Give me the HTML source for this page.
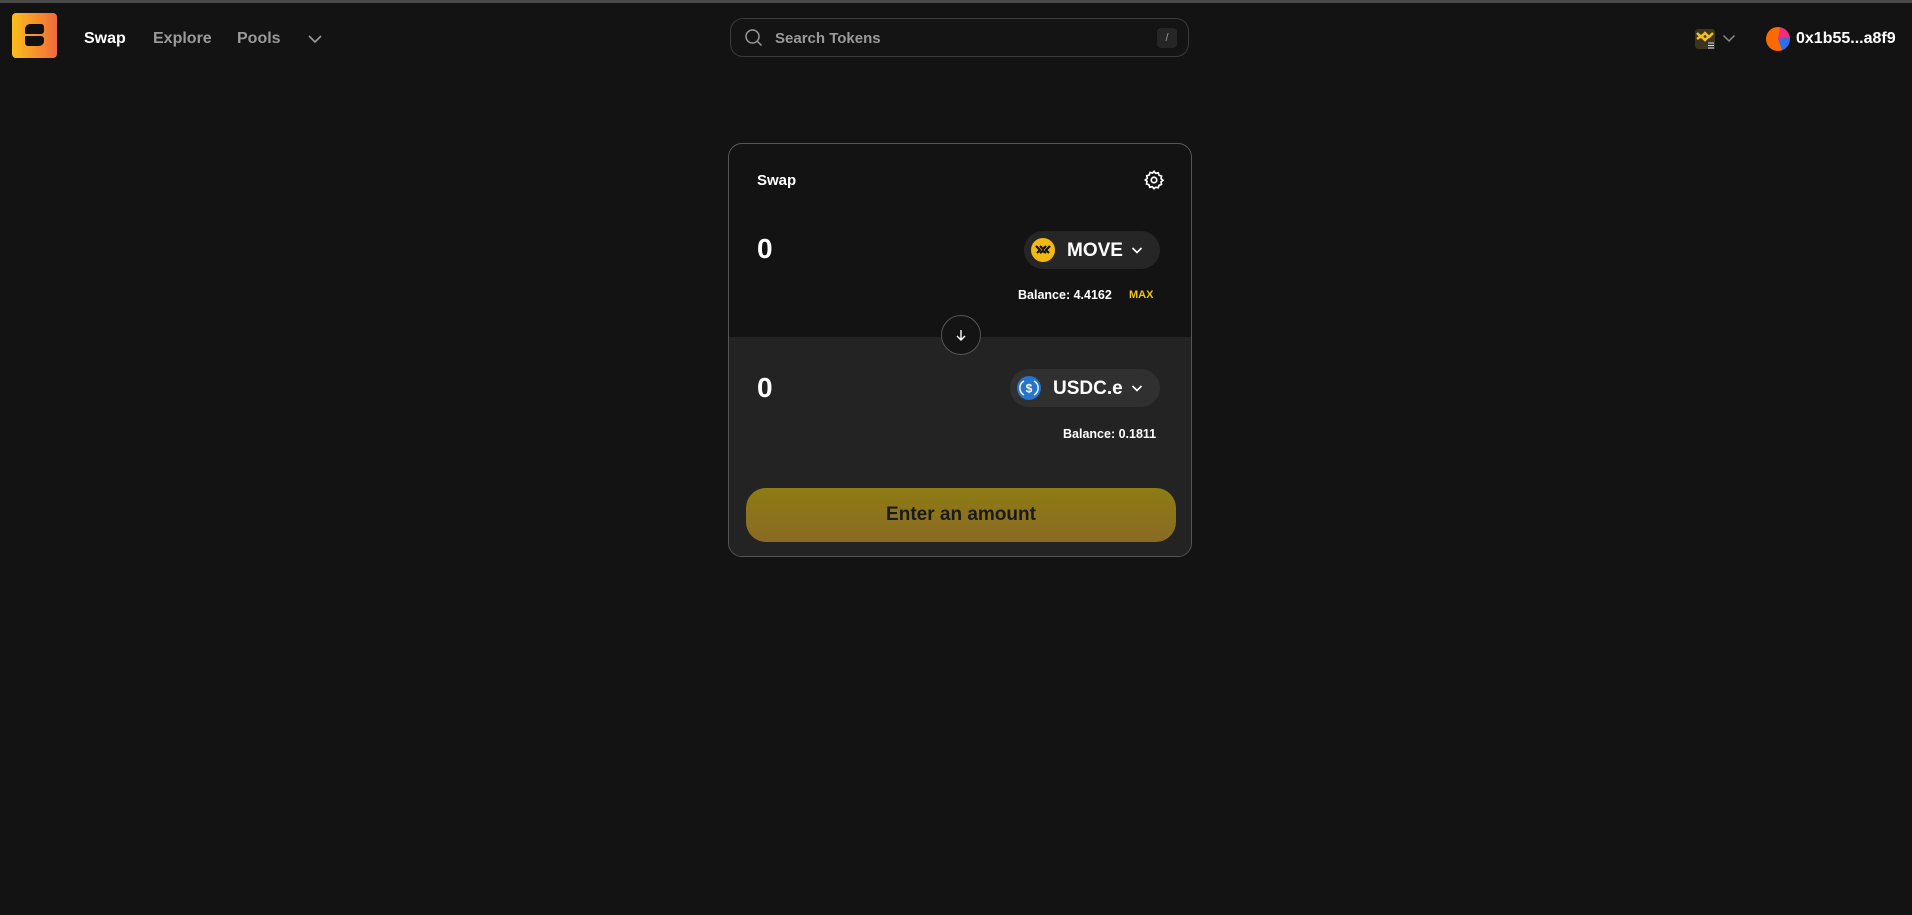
<!DOCTYPE html>
<html><head><meta charset="utf-8"><style>
*{box-sizing:border-box;margin:0;padding:0}
body{width:1912px;height:915px;background:#131313;font-family:"Liberation Sans",sans-serif;color:#fff;position:relative;overflow:hidden}
.abs{position:absolute}
.topline{left:0;top:0;width:1912px;height:3px;background:#4a4a4a}
.nav{font-size:16px;font-weight:bold;top:30px}
</style></head><body>
<div class="abs topline"></div>
<div class="abs" style="left:12px;top:13px;width:45px;height:45px;border-radius:4px;background:linear-gradient(90deg,#fbbf1a,#f06a3c)">
 <div class="abs" style="left:13px;top:11px;width:19px;height:10px;background:#111;border-radius:5px 3px 3px 1px"></div>
 <div class="abs" style="left:13px;top:23px;width:19px;height:10px;background:#111;border-radius:1px 3px 5px 3px"></div>
</div>
<div class="abs nav" style="left:84px;color:#fff">Swap</div>
<div class="abs nav" style="left:153px;color:#9a9a9a">Explore</div>
<div class="abs nav" style="left:237px;color:#9a9a9a">Pools</div>
<svg class="abs" style="left:307px;top:34px" width="16" height="10" viewBox="0 0 16 10"><path d="M2 2l6 6 6-6" stroke="#9a9a9a" stroke-width="1.6" fill="none"/></svg>

<div class="abs" style="left:730px;top:18px;width:459px;height:39px;border:1px solid #3a3a3a;border-radius:13px;background:#141414"></div>
<svg class="abs" style="left:744px;top:28px" width="20" height="20" viewBox="0 0 20 20"><circle cx="8.5" cy="8.5" r="6.5" stroke="#9a9a9a" stroke-width="1.5" fill="none"/><path d="M13.5 13.5l4 4" stroke="#9a9a9a" stroke-width="1.5"/></svg>
<div class="abs" style="left:775px;top:30px;font-size:15px;font-weight:bold;color:#9a9a9a">Search Tokens</div>
<div class="abs" style="left:1157px;top:28px;width:20px;height:20px;background:#262626;border-radius:4px;color:#999;font-size:11px;text-align:center;line-height:20px">/</div>

<div class="abs" style="left:1695px;top:29px;width:20px;height:20px;background:#3a3420;border-radius:3px">
 <svg width="20" height="20" viewBox="0 0 20 20"><path d="M2 4l4 4 4-4 4 4 4-4M2 10l4-3 4 4 4-4" stroke="#f2c21b" stroke-width="2.5" fill="none"/><rect x="12" y="12" width="8" height="8" fill="#333"/><path d="M13 14h6M13 16.5h6M13 19h6" stroke="#ddd" stroke-width="1"/></svg>
</div>
<svg class="abs" style="left:1722px;top:34px" width="14" height="9" viewBox="0 0 14 9"><path d="M1.5 1.5l5.5 5.5 5.5-5.5" stroke="#888" stroke-width="1.5" fill="none"/></svg>
<div class="abs" style="left:1766px;top:27px;width:24px;height:24px;border-radius:50%;background:conic-gradient(from 10deg,#f12c7a 0 70deg,#2f6ee8 70deg 150deg,#ff6a00 150deg 360deg)"></div>
<div class="abs" style="left:1796px;top:30px;font-size:16px;font-weight:bold">0x1b55...a8f9</div>

<div class="abs" style="left:728px;top:143px;width:464px;height:414px;border:1px solid #555;border-radius:14px;overflow:hidden;background:#131313">
 <div class="abs" style="left:0;top:193px;width:464px;height:221px;background:#232323"></div>
 <div class="abs" style="left:28px;top:28px;font-size:15px;font-weight:bold">Swap</div>
 <svg class="abs" style="left:414px;top:25px" width="22" height="22" viewBox="0 0 24 24" fill="none" stroke="#fff" stroke-width="1.8"><circle cx="12" cy="12" r="3"/><path d="M12 2.5l1.8 2.2 2.8-.6.9 2.7 2.7.9-.6 2.8 2.2 1.8-2.2 1.8.6 2.8-2.7.9-.9 2.7-2.8-.6L12 21.5l-1.8-2.2-2.8.6-.9-2.7-2.7-.9.6-2.8L2.5 12l2.2-1.8-.6-2.8 2.7-.9.9-2.7 2.8.6z"/></svg>
 <div class="abs" style="left:28px;top:89px;font-size:28px;font-weight:bold">0</div>
 <div class="abs" style="left:295px;top:87px;width:136px;height:38px;border-radius:19px;background:#262626"></div>
 <div class="abs" style="left:302px;top:94px;width:24px;height:24px;border-radius:50%;background:#f2b90f">
  <svg width="24" height="24" viewBox="0 0 24 24"><path d="M5 8l4 4-3 3M19 8l-4 4 3 3M9 8l3 3 3-3M9 15l3-2 3 2" stroke="#111" stroke-width="2.2" fill="none"/></svg>
 </div>
 <div class="abs" style="left:338px;top:96px;font-size:19px;font-weight:bold">MOVE</div>
 <svg class="abs" style="left:402px;top:102px" width="12" height="9" viewBox="0 0 12 9"><path d="M1.5 2l4.5 4.5 4.5-4.5" stroke="#fff" stroke-width="1.6" fill="none"/></svg>
 <div class="abs" style="left:289px;top:144px;font-size:12.5px;font-weight:bold">Balance: 4.4162</div>
 <div class="abs" style="left:400px;top:145px;font-size:11px;font-weight:bold;color:#f2c21b">MAX</div>
 <div class="abs" style="left:212px;top:171px;width:40px;height:40px;border-radius:50%;border:1px solid #555;background:#141414"></div>
 <svg class="abs" style="left:225px;top:184px" width="14" height="14" viewBox="0 0 14 14"><path d="M7 2v10M3 8l4 4 4-4" stroke="#fff" stroke-width="1.4" fill="none"/></svg>
 <div class="abs" style="left:28px;top:228px;font-size:28px;font-weight:bold">0</div>
 <div class="abs" style="left:281px;top:225px;width:150px;height:38px;border-radius:19px;background:#303030"></div>
 <div class="abs" style="left:288px;top:232px;width:24px;height:24px;border-radius:50%;background:#2775ca">
  <svg width="24" height="24" viewBox="0 0 24 24"><path d="M7 5a8 8 0 0 0 0 14M17 5a8 8 0 0 1 0 14" stroke="#fff" stroke-width="1.4" fill="none"/><text x="12" y="16.5" font-size="12" font-weight="bold" fill="#fff" text-anchor="middle" font-family="Liberation Sans">$</text></svg>
 </div>
 <div class="abs" style="left:324px;top:234px;font-size:19px;font-weight:bold">USDC.e</div>
 <svg class="abs" style="left:402px;top:240px" width="12" height="9" viewBox="0 0 12 9"><path d="M1.5 2l4.5 4.5 4.5-4.5" stroke="#fff" stroke-width="1.6" fill="none"/></svg>
 <div class="abs" style="left:334px;top:283px;font-size:12.5px;font-weight:bold">Balance: 0.1811</div>
 <div class="abs" style="left:17px;top:344px;width:430px;height:54px;border-radius:20px;background:linear-gradient(180deg,#8d7c12,#8a6a25);color:#1a1a1a;font-size:19px;font-weight:bold;text-align:center;line-height:54px">Enter an amount</div>
</div>
</body></html>
